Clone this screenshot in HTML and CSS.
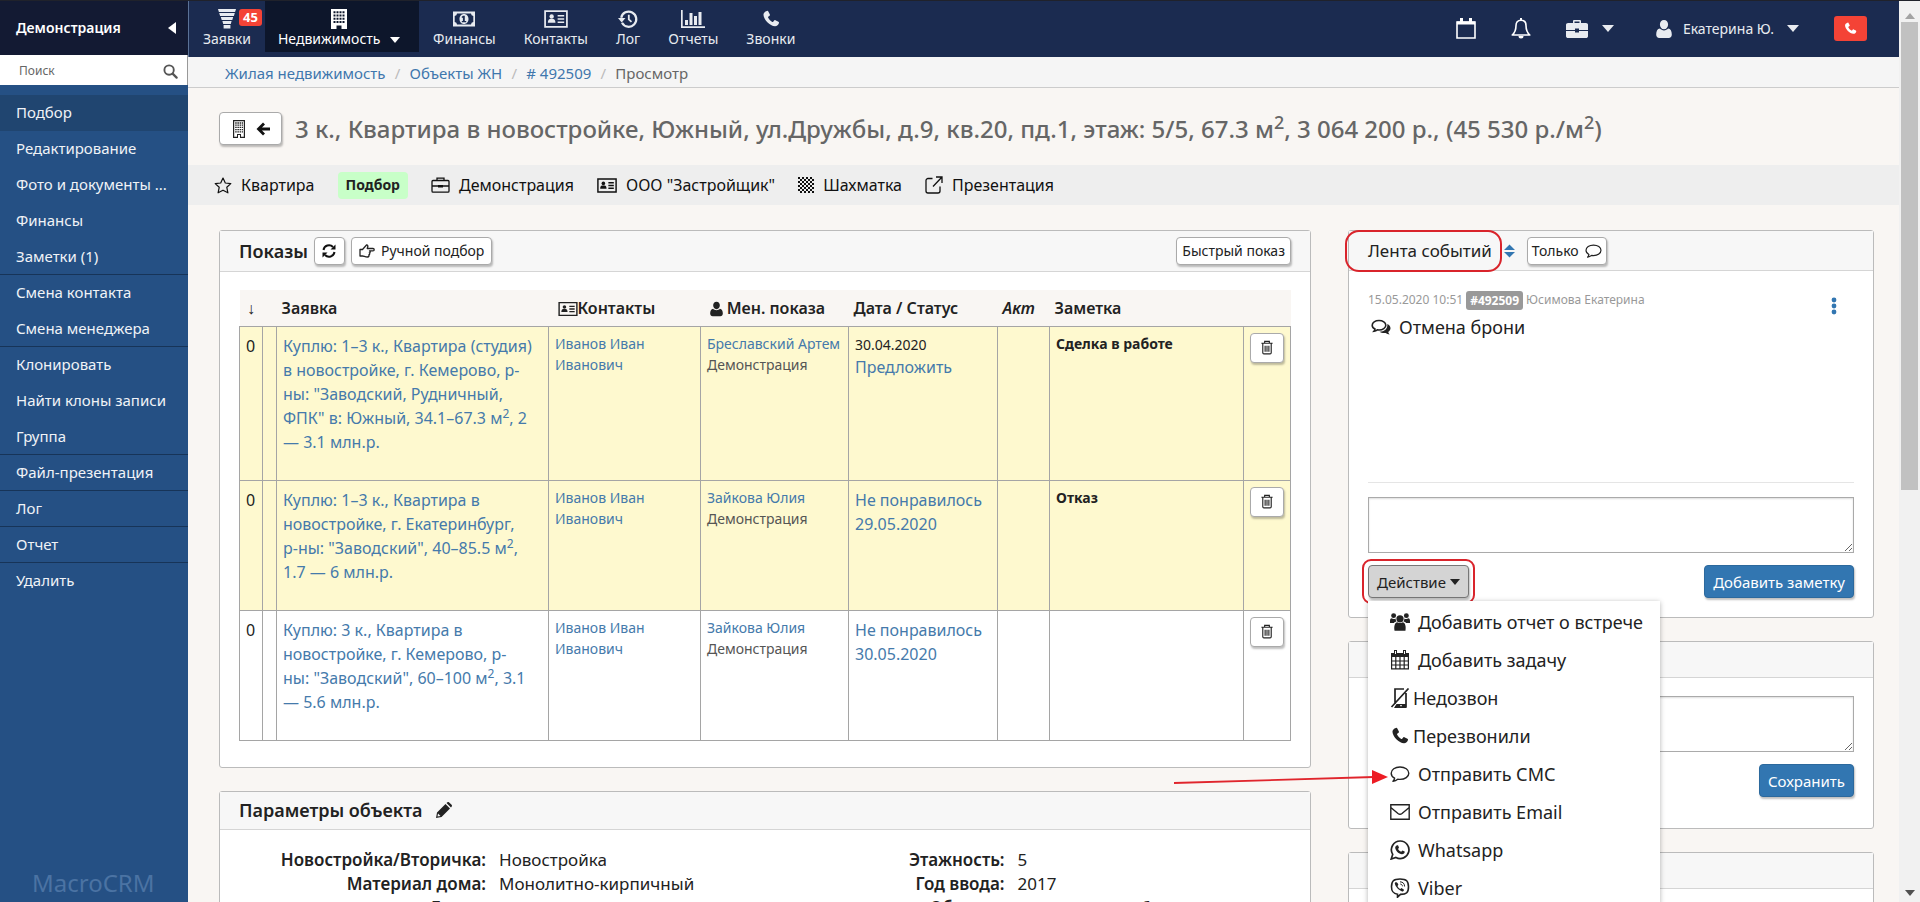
FILE: index.html
```html
<!DOCTYPE html>
<html lang="ru">
<head>
<meta charset="utf-8">
<title>Подбор</title>
<link rel="stylesheet" href="styles.css">
</head>
<body>
<svg class="defs" aria-hidden="true">
  <symbol id="i-phone" viewBox="0 0 16 16"><path fill="currentColor" d="M4.300 0.800c.6-.2.900-.1 1.200.4l1.500 2.700c.2.500.1.800-.3 1.100l-1.200.9c-.2.200-.2.500-.1.800.8 1.700 2 3 3.700 3.900.3.200.6.100.8-.1l1-1.200c.3-.3.600-.4 1-.2l2.700 1.400c.5.300.6.600.5 1.100-.4 1.700-1.800 2.900-3.500 2.900C7 14.500 1.400 8.500 1.300 4.300 1.300 2.500 2.600 1.200 4.300.8z"/></symbol>
  <symbol id="i-building" viewBox="0 0 14 18"><path fill="currentColor" fill-rule="evenodd" d="M1 0h12v18H8v-3H6v3H1zM2.200 1.200v15.600H5V14h4v2.800h2.800V1.200z"/><path stroke="currentColor" stroke-width="1.300" stroke-dasharray="1.500 .7" d="M3.200 3h7.800M3.200 5.200h7.800M3.200 7.400h7.800M3.200 9.600h7.800M3.200 11.800h7.800"/></symbol>
  <symbol id="i-tower" viewBox="0 0 16 20"><path fill="currentColor" fill-rule="evenodd" d="M0 0h16v20h-5.500v-3.500h-5V20H0zM2.500 2.300v2h2v-2zm3 0v2h2v-2zm3 0v2h2v-2zm3 0v2h2v-2zM2.500 5.500v2h2v-2zm3 0v2h2v-2zm3 0v2h2v-2zm3 0v2h2v-2zM2.500 8.700v2h2v-2zm3 0v2h2v-2zm3 0v2h2v-2zm3 0v2h2v-2zM2.500 11.900v2h2v-2zm3 0v2h2v-2zm3 0v2h2v-2zm3 0v2h2v-2z"/></symbol>
  <symbol id="i-card" viewBox="0 0 22 18"><path fill="none" stroke="currentColor" stroke-width="1.600" d="M1 1.800h20v14.400H1z"/><circle cx="7" cy="6.700" r="2" fill="currentColor"/><path fill="currentColor" d="M3.500 12.500c0-2.500 1-3.600 2-3.600h3c1 0 2 1.100 2 3.600z"/><path stroke="currentColor" stroke-width="1.500" d="M12.500 6h6M12.500 9h6M12.500 12h6"/></symbol>
  <symbol id="i-user" viewBox="0 0 16 18"><path fill="currentColor" d="M8 0c2.500 0 4.100 1.900 4.100 4.500S10.500 9.300 8 9.300 3.900 7.100 3.900 4.500 5.500 0 8 0zM3.800 8.600c1.200 1.200 2.600 1.800 4.200 1.800s3-.6 4.200-1.800c2.400.3 3.600 2.600 3.600 6 0 2-1.300 3.400-3 3.400H3.200c-1.700 0-3-1.400-3-3.400 0-3.400 1.200-5.700 3.600-6z"/></symbol>
  <symbol id="i-case" viewBox="0 0 22 18"><path fill="currentColor" fill-rule="evenodd" d="M7 3V1.200C7 .5 7.500 0 8.200 0h5.600c.7 0 1.200.5 1.200 1.200V3h5c1 0 2 .8 2 1.800V10H13V8.500H9V10H0V4.800C0 3.800 1 3 2 3zm1.500 0h5V1.500h-5zM0 11h9v1.500h4V11h9v5.200c0 1-1 1.800-2 1.800H2c-1 0-2-.8-2-1.800z"/></symbol>
  <symbol id="i-comment" viewBox="0 0 20 18"><path fill="none" stroke="currentColor" stroke-width="1.400" stroke-linejoin="round" d="M10 2c5 0 8.800 2.700 8.800 6.200S15 14.400 10 14.400c-.8 0-1.600-.1-2.300-.2-1.300 1.200-2.900 1.900-4.700 2.100.9-.9 1.400-1.900 1.600-3.100C2.500 12.100 1.200 10.300 1.200 8.200 1.200 4.700 5 2 10 2z"/></symbol>
  <symbol id="i-trash" viewBox="0 0 14 16"><path fill="none" stroke="currentColor" stroke-width="1.200" d="M1 3.500h12M4.500 3.500V1.500h5v2M2.500 3.500v10c0 .8.400 1.300 1.200 1.300h6.600c.8 0 1.200-.5 1.200-1.300v-10M5 6v6.500M7 6v6.500M9 6v6.500"/></symbol>
</svg>

<div class="page">
  <aside class="sidebar">
    <div class="side-head"><span>Демонстрация</span><button class="plain" aria-label="Свернуть"><svg width="8" height="12" viewBox="0 0 8 12"><path fill="#fff" d="M8 0v12L0 6z"/></svg></button></div>
    <label class="search"><input type="text" placeholder="Поиск" aria-label="Поиск"><svg width="15" height="15" viewBox="0 0 16 16"><circle cx="6.500" cy="6.500" r="5" fill="none" stroke="#555" stroke-width="2"/><path stroke="#555" stroke-width="2.400" stroke-linecap="round" d="M10.500 10.500l4 4"/></svg></label>
    <nav class="side-nav">
      <a class="on" href="#">Подбор</a>
      <a href="#">Редактирование</a>
      <a href="#">Фото и документы ...</a>
      <a href="#">Финансы</a>
      <a class="line" href="#">Заметки (1)</a>
      <a href="#">Смена контакта</a>
      <a class="line" href="#">Смена менеджера</a>
      <a href="#">Клонировать</a>
      <a href="#">Найти клоны записи</a>
      <a class="line" href="#">Группа</a>
      <a class="line" href="#">Файл-презентация</a>
      <a class="line" href="#">Лог</a>
      <a class="line" href="#">Отчет</a>
      <a href="#">Удалить</a>
    </nav>
    <div class="brand">MacroCRM</div>
  </aside>

  <div class="main">
    <header class="top">
      <nav class="top-nav">
        <a href="#"><svg width="20" height="20" viewBox="0 0 20 20"><path fill="#e8ebf0" d="M1 0h18l-.9 3H1.900zM2.200 4h15.600l-.9 3H3.100zM3.800 8h12.400l-.9 3H4.700zM5.400 12h9.200l-.8 3H6.200zM6.600 16h6.800v3.500H6.600z"/></svg><span>Заявки</span><b class="count">45</b></a>
        <a class="on" href="#"><svg width="16" height="20"><use href="#i-tower"/></svg><span>Недвижимость <i class="caret"></i></span></a>
        <a href="#"><svg width="22" height="20" viewBox="0 0 22 20"><path fill="#e8ebf0" fill-rule="evenodd" d="M0 2.500h22v15H0zM4 4.500a2.500 2.500 0 0 1-2.300 2.400v6.200A2.500 2.500 0 0 1 4 15.500h14a2.500 2.500 0 0 1 2.300-2.400V6.900A2.500 2.500 0 0 1 18 4.500z"/><path fill="#e8ebf0" fill-rule="evenodd" d="M11 5c2.800 0 4.500 2.200 4.500 5s-1.700 5-4.500 5-4.500-2.200-4.500-5S8.200 5 11 5zm-1 1.800-1.500 1.300.7.900.7-.5V12H8.800v1.200h4.400V12h-1.400V6.800z"/></svg><span>Финансы</span></a>
        <a href="#"><svg width="24" height="20"><use href="#i-card"/></svg><span>Контакты</span></a>
        <a href="#"><svg width="20" height="20" viewBox="0 0 20 20"><path fill="none" stroke="#e8ebf0" stroke-width="2.200" d="M4 13.800a7.600 7.600 0 1 0-.8-5"/><path fill="#e8ebf0" d="M0 9h7.500L3.700 13.500z"/><path fill="none" stroke="#e8ebf0" stroke-width="1.800" d="M10.800 5.800v4.600l2.700 2.400"/></svg><span>Лог</span></a>
        <a href="#"><svg width="24" height="20" viewBox="0 0 24 20"><path fill="#e8ebf0" d="M0 1h1.700v16.200H24V19H0zM4 11h3v5H4zM8.500 4h3v12h-3zM13 7h3v9h-3zM17.500 3h3v13h-3z"/></svg><span>Отчеты</span></a>
        <a href="#"><svg width="18" height="20"><use href="#i-phone"/></svg><span>Звонки</span></a>
      </nav>
      <div class="tools">
        <button class="plain" aria-label="Календарь"><svg width="20" height="21" viewBox="0 0 20 21"><path fill="none" stroke="#fff" stroke-width="1.600" d="M1 4h18v16H1z"/><path fill="#fff" d="M1 3.500h18v3H1zM4 0h3v5H4zM13 0h3v5h-3z"/></svg></button>
        <button class="plain" aria-label="Уведомления"><svg width="20" height="21" viewBox="0 0 20 21"><path fill="none" stroke="#fff" stroke-width="1.600" stroke-linejoin="round" d="M10 2.200c3.500 0 5 2.600 5 5.300 0 5 1.500 7.500 3.800 9.500H1.200C3.500 15 5 12.500 5 7.500c0-2.700 1.500-5.300 5-5.300z"/><path fill="#fff" d="M9 0h2v2H9zM7.500 18h5a2.500 2.500 0 0 1-5 0z"/></svg></button>
        <button class="plain" aria-label="Портфель"><svg width="22" height="18"><use href="#i-case"/></svg><i class="caret"></i></button>
        <button class="plain who"><svg width="16" height="18"><use href="#i-user"/></svg><span>Екатерина Ю.</span><i class="caret"></i></button>
        <button class="call" aria-label="Позвонить"><svg width="13" height="13"><use href="#i-phone"/></svg></button>
      </div>
    </header>

    <nav class="crumbs"><a href="#">Жилая недвижимость</a><i>/</i><a href="#">Объекты ЖН</a><i>/</i><a href="#"># 492509</a><i>/</i><span>Просмотр</span></nav>

    <div class="title">
      <button class="btn back" aria-label="Назад"><svg width="14" height="18"><use href="#i-building"/></svg><svg width="14" height="14" viewBox="0 0 14 14"><path fill="none" stroke="#111" stroke-width="2.800" d="M8 1.500L2.500 7 8 12.500M3 7h11"/></svg></button>
      <h1>3 к., Квартира в новостройке, Южный, ул.Дружбы, д.9, кв.20, пд.1, этаж: 5/5, 67.3 м<sup>2</sup>, 3 064 200 р., (45 530 р./м<sup>2</sup>)</h1>
    </div>

    <nav class="tabs">
      <a href="#"><svg width="18" height="17" viewBox="0 0 18 17"><path fill="none" stroke="#111" stroke-width="1.200" stroke-linejoin="round" d="M9 1l2.300 5 5.500.6-4 3.700 1.100 5.500L9 13.200l-4.900 2.600 1.100-5.500-4-3.700L6.700 6z"/></svg>Квартира</a>
      <a class="pill" href="#">Подбор</a>
      <a href="#"><svg width="19" height="16" viewBox="0 0 19 16"><path fill="none" stroke="#111" stroke-width="1.300" d="M2 3.500h15c.6 0 1 .5 1 1V14c0 .7-.4 1.200-1 1.200H2c-.6 0-1-.5-1-1.200V4.500c0-.5.400-1 1-1zM6 3.500V1.200h7v2.300M1 9h6M12 9h6"/><path fill="#111" d="M7 8h5v2.500H7z"/></svg>Демонстрация</a>
      <a href="#"><svg width="20" height="17"><use href="#i-card"/></svg>ООО "Застройщик"</a>
      <a href="#"><svg width="16" height="16" viewBox="0 0 16 16"><path stroke="#111" stroke-width="2" stroke-dasharray="2" d="M0 1h16M0 5h16M0 9h16M0 13h16M2 3h14M2 7h14M2 11h14M2 15h14"/></svg>Шахматка</a>
      <a href="#"><svg width="18" height="18" viewBox="0 0 18 18"><path fill="none" stroke="#111" stroke-width="1.300" d="M7.500 2.500H3c-1 0-2 1-2 2V15c0 1 1 2 2 2h10c1 0 2-1 2-2v-4.500M11 1h6v6M17 1L8 10.500"/></svg>Презентация</a>
    </nav>

    <div class="columns">
      <div class="left">
        <section class="panel">
          <div class="panel-head shows"><h2>Показы</h2>
            <button class="btn sq" aria-label="Обновить"><svg width="14" height="14" viewBox="0 0 14 14"><path fill="none" stroke="#111" stroke-width="2" d="M1.500 6A5.500 5.500 0 0 1 11 3M12.500 8A5.500 5.500 0 0 1 3 11"/><path fill="#111" d="M13.500.5v5h-5zM.5 13.500v-5h5z"/></svg></button>
            <button class="btn hand"><svg width="16" height="14" viewBox="0 0 16 14"><path fill="none" stroke="#222" stroke-width="1.300" stroke-linejoin="round" d="M1 5.500h2.500L7.500 1c1.200-.2 1.500.9 1.300 1.800L8.200 4.500H14c1.600 0 1.600 2.300 0 2.300h-3.500c1 .3 1 2-.2 2 .8.400.6 1.900-.5 2 .5.600.2 2.200-1.300 2.200-2.500 0-3.500-1-5-1H1z"/></svg>Ручной подбор</button>
            <button class="btn push">Быстрый показ</button>
          </div>
          <div class="panel-body shows-body">
            <table>
              <colgroup><col class="c1"><col class="c2"><col class="c3"><col class="c4"><col class="c5"><col class="c6"><col class="c7"><col class="c8"><col class="c9"></colgroup>
              <thead><tr><th>↓</th><th></th><th>Заявка</th><th class="con"><svg width="20" height="16"><use href="#i-card"/></svg>Контакты</th><th class="men"><svg width="13" height="16"><use href="#i-user"/></svg>&nbsp;Мен. показа</th><th>Дата / Статус</th><th><em>Акт</em></th><th>Заметка</th><th></th></tr></thead>
              <tbody>
                <tr class="hot tall"><td>0</td><td></td><td><a href="#">Куплю: 1–3 к., Квартира (студия) в новостройке, г. Кемерово, р-ны: "Заводский, Рудничный, ФПК" в: Южный, 34.1–67.3 м<sup>2</sup>, 2 — 3.1 млн.р.</a></td><td class="s"><a href="#">Иванов Иван Иванович</a></td><td class="s"><a href="#">Бреславский Артем</a><br>Демонстрация</td><td><small>30.04.2020</small><a href="#">Предложить</a></td><td></td><td class="s"><b>Сделка в работе</b></td><td><button class="btn del" aria-label="Удалить"><svg width="14" height="15"><use href="#i-trash"/></svg></button></td></tr>
                <tr class="hot"><td>0</td><td></td><td><a href="#">Куплю: 1–3 к., Квартира в новостройке, г. Екатеринбург, р-ны: "Заводский", 40–85.5 м<sup>2</sup>, 1.7 — 6 млн.р.</a></td><td class="s"><a href="#">Иванов Иван Иванович</a></td><td class="s"><a href="#">Зайкова Юлия</a><br>Демонстрация</td><td><a href="#">Не понравилось 29.05.2020</a></td><td></td><td class="s"><b>Отказ</b></td><td><button class="btn del" aria-label="Удалить"><svg width="14" height="15"><use href="#i-trash"/></svg></button></td></tr>
                <tr><td>0</td><td></td><td><a href="#">Куплю: 3 к., Квартира в новостройке, г. Кемерово, р-ны:&nbsp;"Заводский", 60–100 м<sup>2</sup>, 3.1 — 5.6 млн.р.</a></td><td class="s"><a href="#">Иванов Иван Иванович</a></td><td class="s"><a href="#">Зайкова Юлия</a><br>Демонстрация</td><td><a href="#">Не понравилось 30.05.2020</a></td><td></td><td></td><td><button class="btn del" aria-label="Удалить"><svg width="14" height="15"><use href="#i-trash"/></svg></button></td></tr>
              </tbody>
            </table>
          </div>
        </section>

        <section class="panel">
          <div class="panel-head"><h2>Параметры объекта</h2><svg width="17" height="17" viewBox="0 0 17 17"><path fill="#222" fill-rule="evenodd" d="M1 16l1-5.500L10.500 2 15 6.500 6.500 15zM3 11.500L2.500 14.500 5.500 14zM11.500 1l1-.8c.6-.4 1.200-.3 1.700.2l2.400 2.400c.5.500.5 1.200.1 1.700L16 5.500z"/></svg></div>
          <div class="params">
            <dl><dt>Новостройка/Вторичка:</dt><dd>Новостройка</dd><dt>Материал дома:</dt><dd>Монолитно-кирпичный</dd><dt>Город:</dt><dd>Барнаул</dd></dl>
            <dl><dt>Этажность:</dt><dd>5</dd><dt>Год ввода:</dt><dd>2017</dd><dt>Область:</dt><dd>Кемеровская обл.</dd></dl>
          </div>
        </section>
      </div>

      <div class="right">
        <section class="panel feed">
          <div class="panel-head feed-head"><h2 class="light"><span class="mark feed-mark">Лента событий</span></h2><svg width="11" height="14" viewBox="0 0 12 14"><path fill="#3276b1" d="M6 0l6 6H0zM0 8h12l-6 6z"/></svg><button class="btn">Только <svg width="17" height="16"><use href="#i-comment"/></svg></button></div>
          <div class="panel-body">
            <div class="events">
              <div class="meta"><span>15.05.2020 10:51</span><b>#492509</b><span>Юсимова Екатерина</span><button class="plain dots" aria-label="Меню"><svg width="6" height="18" viewBox="0 0 6 18"><g fill="#3276b1"><circle cx="3" cy="3" r="2.400"/><circle cx="3" cy="9" r="2.400"/><circle cx="3" cy="15" r="2.400"/></g></svg></button></div>
              <div class="event"><svg width="20" height="17" viewBox="0 0 20 17"><path fill="none" stroke="#222" stroke-width="1.600" d="M8 1.500c3.800 0 6.800 2 6.800 4.700S11.800 11 8 11c-.6 0-1.200 0-1.700-.2-1 .7-2 1.100-3.200 1.300.5-.6.800-1.300.9-2.100C2.300 9.200 1.200 7.800 1.200 6.200 1.200 3.500 4.200 1.500 8 1.500z"/><path fill="#222" d="M16.300 5c2 1 3.200 2.500 3.200 4.300 0 1.500-.9 2.800-2.300 3.700.2.900.7 1.700 1.400 2.400-1.500-.1-2.900-.6-4-1.500-2.300.3-4.600-.1-6.200-1.200 4.700.1 8.600-2.700 7.900-7.700z"/></svg>Отмена брони</div>
            </div>
            <textarea aria-label="Заметка"></textarea>
            <div class="actions">
              <div class="drop mark act-mark">
                <button class="btn active">Действие <i class="caret"></i></button>
                <ul class="menu">
                  <li><a href="#"><svg width="20" height="20" viewBox="0 0 22 20"><g fill="#222"><circle cx="11" cy="6.500" r="4"/><path d="M5 19.500c-1-6 1-9.300 3-9.300 1.800 1.300 4.200 1.300 6 0 2 0 4 3.300 3 9.300z"/><circle cx="4" cy="3" r="2.700"/><circle cx="18" cy="3" r="2.700"/><path d="M0 11c-.3-3.500.6-5 1.800-5C3 7 5 7 6.200 6.200c0 1.500.4 2.800 1 3.300-1.300.1-2.200.7-2.800 1.500zM22 11c.3-3.500-.6-5-1.800-5-1.200 1-3.200 1-4.400.2 0 1.500-.4 2.800-1 3.300 1.300.1 2.200.7 2.800 1.500z"/></g></svg>Добавить отчет о встрече</a></li>
                  <li><a href="#"><svg width="20" height="20" viewBox="0 0 20 20"><path fill="#222" d="M1 3h18v4H1zM4 0h3v5H4zM13 0h3v5h-3z"/><path fill="none" stroke="#222" stroke-width="1.200" d="M1.600 5v13.900h16.800V5M5.800 7v12M10 7v12M14.200 7v12M1.600 11h16.800M1.600 15h16.800"/><path fill="#fff" d="M5 1h1v3H5zM14 1h1v3h-1z"/></svg>Добавить задачу</a></li>
                  <li><a class="near" href="#"><svg width="20" height="20" viewBox="0 0 20 20"><path fill="none" stroke="#222" stroke-width="1.700" d="M14 1H5v15M16 5v14H5M18.500.5L1.500 19"/><path fill="#222" fill-rule="evenodd" d="M6.500 16H16v4H4zM10 17.200v1.500h2v-1.500z"/></svg>Недозвон</a></li>
                  <li><a class="near" href="#"><svg width="20" height="18"><use href="#i-phone"/></svg>Перезвонили</a></li>
                  <li><a href="#"><svg width="20" height="20"><use href="#i-comment"/></svg>Отправить СМС</a></li>
                  <li><a href="#"><svg width="20" height="16" viewBox="0 0 20 16"><path fill="none" stroke="#222" stroke-width="1.400" d="M.8.8h18.400v14.400H.8zM.8 3.500L8 9.500c1.300 1 2.700 1 4 0l7.200-6"/></svg>Отправить Email</a></li>
                  <li><a href="#"><svg width="20" height="20" viewBox="0 0 20 20"><path fill="none" stroke="#222" stroke-width="1.700" d="M10.300 1a8.800 8.800 0 1 1-4.400 16.500L1.200 19l1.500-4.600A8.800 8.800 0 0 1 10.300 1z"/><path fill="#222" d="M7 5.200l1 .1 1 2.300-.9 1.300c.7 1.300 1.700 2.200 3.100 2.800l1.200-1.200 2.300 1.100c.2 1.800-1.200 2.700-2.700 2.700-3.300-.5-6.200-3.400-6.800-6.400 0-1.200.8-2.400 1.800-2.700z"/></svg>Whatsapp</a></li>
                  <li><a href="#"><svg width="20" height="20" viewBox="0 0 20 20"><path fill="none" stroke="#222" stroke-width="1.600" d="M10 1c6.500 0 8.500 2 8.500 7.800s-2 7.600-8 7.600L7.500 19.200v-3C3 15.500 1.500 13.700 1.500 8.800 1.500 3 3.500 1 10 1z"/><path fill="#222" d="M6 4l1.500 1 .9 1.800-.9 1.200c.5 1.500 1.500 2.400 2.800 3l1.200-.9 2.500 1.600c0 1-.9 1.900-1.900 1.800C8.600 12 5.500 9 4.800 5.600 4.800 4.900 5.300 4.300 6 4z"/><path fill="none" stroke="#222" d="M10 3.800c3 .2 4.500 1.700 4.600 4.700M10.300 6c1.300.2 2 1 2.200 2.300"/></svg>Viber</a></li>
                </ul>
              </div>
              <button class="btn blue">Добавить заметку</button>
            </div>
          </div>
        </section>
        <section class="panel second">
          <div class="panel-head empty"></div>
          <div class="panel-body"><textarea aria-label="Комментарий"></textarea><div class="actions"><button class="btn blue">Сохранить</button></div></div>
        </section>
        <section class="panel"><div class="panel-head empty"></div><div class="panel-body"><textarea aria-label="Описание"></textarea></div></section>
      </div>
    </div>
  </div>

  <div class="scroll"><svg width="10" height="6" viewBox="0 0 10 6"><path fill="#a3a3a3" d="M0 6l5-6 5 6z"/></svg><div class="thumb"></div><svg width="10" height="6" viewBox="0 0 10 6"><path fill="#505050" d="M0 0l5 6 5-6z"/></svg></div>
</div>
<svg class="arrow" width="216" height="20" viewBox="0 0 216 20"><path stroke="#e0252c" stroke-width="1.800" d="M0 13l200-6"/><path fill="#ed1c24" d="M198 0l16 7-16 7z"/></svg>
</body>
</html>
```
FILE: styles.css
```css
* { box-sizing: border-box; }
body {
  margin: 0;
  height: 100vh;
  overflow: hidden;
  font: 16px/24px "Noto Sans", "Open Sans", sans-serif;
  color: #222;
  background: #f9f6f3;
}
a { color: inherit; text-decoration: none; }
button, input, textarea { font: inherit; color: inherit; }
svg { flex: none; }
.defs { position: absolute; width: 0; height: 0; }
.page {
  display: grid;
  grid-template-columns: 188px 1fr 21px;
  grid-template-rows: 100%;
  height: 100vh;
  overflow: hidden;
  border-top: 1px solid #20222b;
}
.plain { display: flex; align-items: center; padding: 0; border: 0; background: none; }
.caret {
  display: inline-block;
  border: 5px solid transparent;
  border-top: 6px solid currentColor;
  border-bottom: 0;
  vertical-align: middle;
}

/* sidebar */
.sidebar { display: flex; flex-direction: column; background: #255084; color: #f0f3f7; font-size: 15px; min-height: 0; }
.side-head { display: flex; align-items: center; justify-content: space-between; height: 54px; padding: 0 12px 0 16px; background: #131a33; font-size: 14px; font-weight: 600; color: #fff; }
.search { display: flex; align-items: center; height: 30px; padding: 2px 9px 0 19px; background: #fff; border-right: 1px solid #999; }
.search input { flex: 1; min-width: 0; padding: 0; border: 0; outline: 0; background: none; font-size: 12px; }
.search input::placeholder { color: #666; opacity: 1; }
.side-nav { display: flex; flex-direction: column; padding-top: 10px; }
.side-nav a { height: 36px; padding: 0 16px; line-height: 35px; white-space: nowrap; }
.side-nav .on { background: #204570; }
.side-nav .line { border-bottom: 1px solid #173458; }
.brand { margin-top: auto; padding: 0 0 2px 32px; font-size: 24px; line-height: 34px; color: #4b73a3; }

/* header */
.main { min-width: 0; min-height: 0; overflow: hidden; }
.top { display: flex; justify-content: space-between; height: 56px; background: #1b2b50; color: #fff; border-left: 1px solid #5a7196; font-size: 14px; }
.top-nav { display: flex; }
.top-nav a { position: relative; display: flex; flex-direction: column; align-items: center; height: 51px; padding: 8px 14px 0; color: #e8ebf0; line-height: 20px; }
.top-nav .on { background: #0d162b; color: #fff; padding: 8px 19px 0 13px; }
.top-nav .caret { margin-left: 6px; }
.count { position: absolute; top: 8px; left: 50px; padding: 0 4px; border-radius: 3px; background: #f44336; color: #fff; font-size: 13px; line-height: 17px; }
.tools { display: flex; align-items: center; gap: 35px; padding: 0 32px 0 0; margin-top: -1px; }
.tools .plain { color: #e8ebf0; }
.tools .caret { border-width: 7px 6px 0; margin-left: 14px; }
.tools .who { margin-left: 7px; gap: 11px; font-size: 14px; }
.tools .who .caret { margin-left: 2px; }
.call { display: flex; align-items: center; justify-content: center; width: 33px; height: 25px; padding: 0; border: 0; border-radius: 3px; background: #f44336; color: #fff; }

.crumbs { display: flex; align-items: center; height: 31px; padding: 2px 37px 0; background: #f5f5f5; border-bottom: 1px solid #ccc; font-size: 15px; color: #666; }
.crumbs a { color: #3f77ad; }
.crumbs i { width: 24px; text-align: center; font-style: normal; color: #bbb; }

.title { display: flex; align-items: center; gap: 13px; height: 77px; padding: 4px 31px 0; }
h1 { margin: 0; font-size: 24px; line-height: 34px; font-weight: 500; color: #666; white-space: nowrap; }
sup { font-size: 75%; line-height: 0; }
.btn { display: inline-flex; align-items: center; gap: 6px; height: 28px; padding: 0 5px; border: 1px solid #aaa; border-radius: 4px; background: #fff; box-shadow: 1px 2px 2px rgba(0, 0, 0, .25); font-size: 14px; white-space: nowrap; }
.back { justify-content: center; width: 63px; height: 33px; gap: 10px; }
.tabs { display: flex; align-items: center; height: 40px; padding: 0 26px; background: #eee; color: #111; }
.tabs a { display: flex; align-items: center; gap: 9px; margin-right: 23px; }
.tabs .pill { height: 27px; padding: 0 8px; border-radius: 4px; background: #c8ffc8; font-size: 14px; font-weight: 700; color: #222; }

/* panels */
.columns { display: grid; grid-template-columns: 1092fr 526fr; gap: 37px; padding: 25px 25px 0 31px; }
.left, .right { min-width: 0; }
.panel { margin-bottom: 23px; background: #fff; border: 1px solid #bbb; border-radius: 3px; }
.panel-head { display: flex; align-items: center; gap: 12px; height: 38px; padding: 0 19px; background: #f7f7f7; border-bottom: 1px solid #d5d5d5; }
.panel-head h2 { margin: 0; font-size: 18px; font-weight: 600; }
.panel-head .light { font-size: 17px; font-weight: 400; }
.shows { height: 41px; gap: 6px; }
.sq { width: 31px; justify-content: center; }
.hand { padding: 0 7px; }
.push { margin-left: auto; }
.panel-body { padding: 19px; }
.shows-body { padding-top: 18px; }

table { width: 100%; border-collapse: collapse; table-layout: fixed; }
.c1 { width: 23px; } .c2 { width: 14px; } .c4 { width: 152px; } .c5 { width: 148px; } .c6 { width: 149px; } .c7 { width: 52px; } .c8 { width: 194px; } .c9 { width: 47px; } .c3 { width: 272px; }
th { height: 36px; padding: 0 5px; background: #f9f6f3; font-size: 16px; font-weight: 600; text-align: left; white-space: nowrap; }
th:first-child { padding: 0; text-align: center; }
th svg { vertical-align: -3px; }
th.men, th.con { padding-left: 9px; }
td { height: 130px; padding: 7px 6px; border: 1px solid #a5a5a5; vertical-align: top; }
td:nth-child(2) { padding: 0; }
td:nth-child(3) { padding-right: 15px; }
td:last-child { padding: 6px; }
.tall td { height: 154px; }
.hot { background: #fef9cf; }
td a { color: #457aab; }
td.s { padding: 6px 0 6px 6px; font-size: 14px; line-height: 21px; color: #555; }
td.s b { color: #222; }
td small { display: block; font-size: 14px; line-height: 21px; }
.del { width: 34px; height: 30px; justify-content: center; padding: 0; }
.panel-body table { margin-bottom: 7px; }

.params { display: grid; grid-template-columns: 519fr 572fr; padding: 18px 0; font-size: 17px; }
.params dl { display: grid; grid-template-columns: 266px 1fr; column-gap: 13px; margin: 0; }
dt { text-align: right; font-weight: 600; }
dd { margin: 0; }

/* event feed */
.feed-head { height: 40px; }
.feed-head .btn { padding: 0 4px; }
.mark { position: relative; }
.mark::after { content: ""; position: absolute; border: 2px solid #d9242b; pointer-events: none; }
.feed-mark::after { inset: -9px -10px -10px -23px; border-radius: 14px; }
.act-mark::after { inset: -6px; border-radius: 9px; }
.events { height: 193px; border-bottom: 1px solid #e5e5e5; margin-bottom: 14px; }
.meta { display: flex; align-items: center; gap: 3px; height: 20px; font-size: 12px; color: #999; }
.meta b { padding: 0 4px; border-radius: 3px; background: #999; color: #fff; line-height: 19px; }
.dots { margin: 12px 17px 0 auto; }
.event { display: flex; align-items: center; gap: 8px; margin-top: 5px; padding-left: 3px; font-size: 18px; }
textarea { display: block; width: 100%; height: 56px; border: 1px solid #aaa; box-shadow: inset 0 1px 2px #ddd; background: #fff; }
.actions { display: flex; margin: 12px 0 0; }
.actions .btn { height: 33px; padding: 0 8px; font-size: 15px; }
.actions .active { gap: 4px; background: #d4d4d4; border-color: #777; }
.actions .blue { margin-left: auto; background: #3276b1; border-color: #2c699d; color: #fff; }
.menu { position: absolute; z-index: 2; top: 36px; left: 0; width: 292px; margin: 0; padding: 0; list-style: none; background: #fff; box-shadow: 0 1px 5px rgba(0, 0, 0, .3); font-size: 18px; }
.menu a { display: flex; align-items: center; gap: 8px; height: 38px; padding: 3px 0 0 22px; white-space: nowrap; }
.menu .near { gap: 3px; }
.second .panel-body { padding: 18px 19px 31px; }
.empty { height: 36px; }

/* scrollbar strip */
.scroll { display: flex; flex-direction: column; align-items: center; padding: 12px 2px 6px; background: #f1f1f1; }
.thumb { flex: none; width: 17px; height: 53%; margin: 3px 0 auto; background: #c1c1c1; }
.arrow { position: absolute; left: 1174px; top: 770px; z-index: 3; }
```
